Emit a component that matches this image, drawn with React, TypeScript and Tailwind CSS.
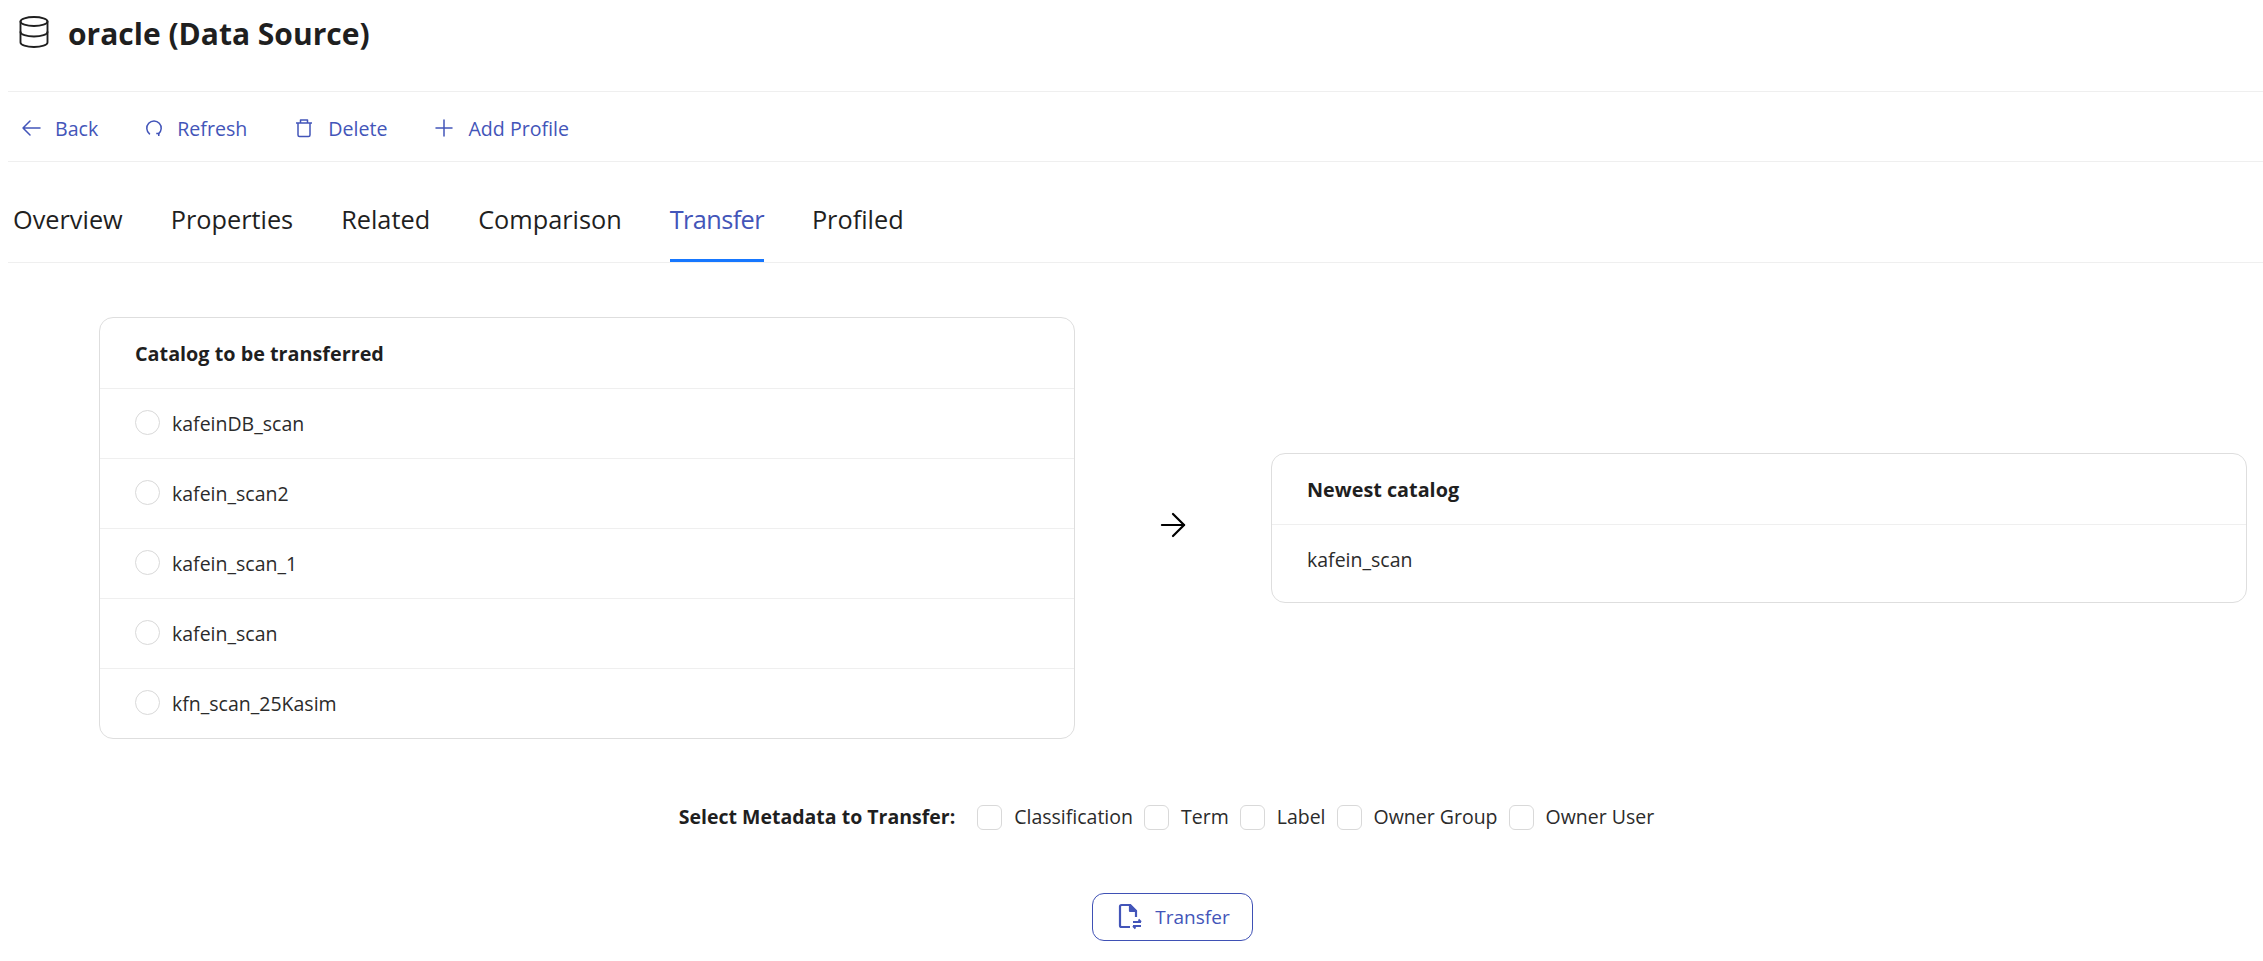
import { ArrowRight, Database } from "lucide-react"

const font = { fontFamily: '"Open Sans", "Noto Sans", sans-serif' }

const tabs = ["Overview", "Properties", "Related", "Comparison", "Transfer", "Profiled"]
const catalogs = ["kafeinDB_scan", "kafein_scan2", "kafein_scan_1", "kafein_scan", "kfn_scan_25Kasim"]
const metadata = ["Classification", "Term", "Label", "Owner Group", "Owner User"]

function BackIcon() {
  return (
    <svg viewBox="0 0 20 20" className="h-[20px] w-[20px]" fill="none" stroke="currentColor" strokeWidth="1.5">
      <path d="M19 10H2M9 3l-7 7 7 7" strokeLinecap="round" strokeLinejoin="round" />
    </svg>
  )
}

function RefreshIcon() {
  return (
    <svg viewBox="0 0 20 20" className="h-[20px] w-[18px]" fill="none" stroke="currentColor" strokeWidth="1.7">
      <path d="M5 16.5A8 8 0 1 1 15 16.5" strokeLinecap="round" />
      <path d="M12.5 16.2h2.8v2.6" strokeLinejoin="round" />
    </svg>
  )
}

function TrashIcon() {
  return (
    <svg viewBox="0 0 20 20" className="h-[20px] w-[20px]" fill="none" stroke="currentColor" strokeWidth="1.5">
      <path d="M2 5h16M6.5 5V2h7v3M4 5v12a1.5 1.5 0 0 0 1.5 1.5h9A1.5 1.5 0 0 0 16 17V5" strokeLinejoin="round" />
    </svg>
  )
}

function PlusIcon() {
  return (
    <svg viewBox="0 0 20 20" className="h-[20px] w-[20px]" fill="none" stroke="currentColor" strokeWidth="1.5">
      <path d="M10 2v16M2 10h16" strokeLinecap="round" />
    </svg>
  )
}

function FileTransferIcon() {
  return (
    <svg viewBox="0 0 24 28" className="h-[28px] w-[24px]" fill="none" stroke="currentColor" strokeWidth="2.2">
      <path d="M12 24H3.5a1.5 1.5 0 0 1-1.5-1.5v-19A1.5 1.5 0 0 1 3.5 2H12l6 6v6" strokeLinejoin="round" />
      <path d="M12 2l6 6h-6z" fill="currentColor" strokeLinejoin="round" />
      <path d="M15 19h8M20.5 16.5 23 19M23 23h-8M17.5 25.5 15 23" strokeWidth="1.8" />
    </svg>
  )
}

function ToolbarButton({ icon, label }: { icon: React.ReactNode; label: string }) {
  return (
    <button className="flex items-center gap-[14px] text-[19.6px] text-[#4355b9]">
      {icon}
      {label}
    </button>
  )
}

function Card({ title, children }: { title: string; children: React.ReactNode }) {
  return (
    <div className="w-[976px] overflow-hidden rounded-[14px] border border-[#dedede] bg-white">
      <div className="flex h-[70px] items-center px-[35px] pt-[2px] text-[19.8px] font-bold text-[#1f1f1f]">{title}</div>
      {children}
    </div>
  )
}

export default function App() {
  return (
    <div className="h-[961px] overflow-hidden bg-white text-[#1f1f1f]" style={font}>
      <header className="ml-2 flex h-[92px] items-start gap-[16px] border-b border-[#efefef] pl-[8px]">
        <Database className="mt-[14px] h-[36px] w-[36px]" strokeWidth={1.25} />
        <h1 className="mt-[11px] text-[30px] font-bold">oracle (Data Source)</h1>
      </header>

      <div className="ml-2 flex h-[70px] items-center gap-[47px] border-b border-[#efefef] pl-[13px] pt-[4px]">
        <ToolbarButton icon={<BackIcon />} label="Back" />
        <ToolbarButton icon={<RefreshIcon />} label="Refresh" />
        <ToolbarButton icon={<TrashIcon />} label="Delete" />
        <ToolbarButton icon={<PlusIcon />} label="Add Profile" />
      </div>

      <nav className="ml-2 flex h-[101px] items-end gap-[48px] border-b border-[#efefef] pl-[5px]">
        {tabs.map((tab) => (
          <div
            key={tab}
            className={`flex h-[70px] items-start pt-[9px] text-[25.3px] ${
              tab === "Transfer" ? "border-b-[3px] border-[#1677ff] tracking-[-0.6px] text-[#4355b9]" : "text-[#1f1f1f]"
            }`}
          >
            {tab}
          </div>
        ))}
      </nav>

      <section className="flex items-center pl-[99px] pt-[54px]">
        <Card title="Catalog to be transferred">
          {catalogs.map((name) => (
            <div key={name} className="flex h-[70px] items-center gap-[12px] border-t border-[#efefef] px-[35px] text-[19.5px] text-[#2b2b2b]">
              <span className="mb-[2px] h-[25px] w-[25px] rounded-full border border-[#d9d9d9]" />
              <span className="pt-[1px]">{name}</span>
            </div>
          ))}
        </Card>
        <div className="flex w-[196px] justify-center pb-[6px]">
          <ArrowRight className="h-[38px] w-[38px] text-black" strokeWidth={1.4} />
        </div>
        <Card title="Newest catalog">
          <div className="flex h-[78px] items-center border-t border-[#efefef] px-[35px] pb-[8px] text-[19.5px] text-[#2b2b2b]">kafein_scan</div>
        </Card>
      </section>

      <div className="mt-[64px] flex h-[28px] items-center justify-center pl-[70px] text-[19.5px]">
        <span className="mr-[22px] font-bold">Select Metadata to Transfer:</span>
        {metadata.map((item) => (
          <label key={item} className="mr-[11px] flex items-center gap-[12px] text-[#2b2b2b] last:mr-0">
            <span className="h-[25px] w-[25px] rounded-[6px] border border-[#d9d9d9]" />
            {item}
          </label>
        ))}
      </div>

      <div className="mt-[62px] flex justify-center pl-[81px]">
        <button className="flex h-[48px] w-[161px] items-center justify-center gap-[13px] rounded-[12px] border border-[#3f51b5] pl-[4px] text-[19px] text-[#4355b9]">
          <FileTransferIcon />
          Transfer
        </button>
      </div>
    </div>
  )
}
